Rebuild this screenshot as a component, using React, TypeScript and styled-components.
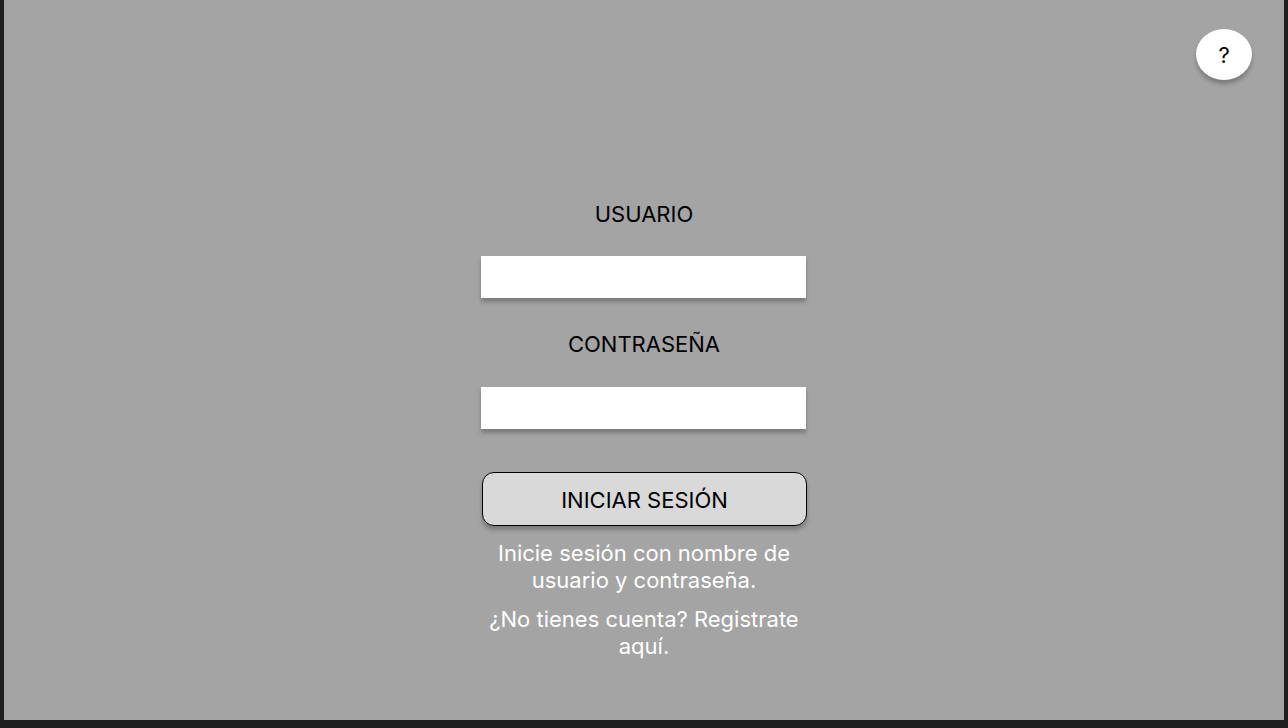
import React from "react";
import styled, { createGlobalStyle } from "styled-components";

const Global = createGlobalStyle`
  html, body { margin: 0; padding: 0; background: #1e1e1e; }
  body { font-family: Inter, "Noto Sans", sans-serif; }
  * { box-sizing: border-box; }
`;

const Frame = styled.div`
  width: 1288px;
  height: 728px;
  padding: 0 4px 8px 4px;
  background: #1e1e1e;
`;

const Screen = styled.main`
  position: relative;
  width: 1280px;
  height: 720px;
  background: #a4a4a4;
  display: flex;
  justify-content: center;
  padding-top: 201px;
`;

const HelpButton = styled.button`
  position: absolute;
  top: 29px;
  right: 32px;
  width: 56px;
  height: 51px;
  border-radius: 50%;
  border: none;
  background: #ffffff;
  box-shadow: 0 4px 4px rgba(0, 0, 0, 0.25);
  font-family: Inter, sans-serif;
  font-size: 22px;
  font-weight: 400;
  color: #000;
  display: flex;
  align-items: center;
  justify-content: center;
  padding: 0;
`;

const Form = styled.form`
  width: 326px;
  display: flex;
  flex-direction: column;
  align-items: flex-start;
`;

const Label = styled.label<{ $gapTop?: number; $gapBottom?: number }>`
  align-self: center;
  font-size: 22px;
  line-height: 26px;
  color: #000;
  margin-top: ${(p) => p.$gapTop ?? 0}px;
  margin-bottom: ${(p) => p.$gapBottom ?? 29}px;
`;

const Input = styled.input`
  width: 325px;
  height: 42px;
  border: none;
  background: #ffffff;
  box-shadow: 0 4px 4px rgba(0, 0, 0, 0.25);
  outline: none;
`;

const SubmitButton = styled.button`
  margin-top: 43px;
  margin-left: 1px;
  width: 325px;
  height: 54px;
  padding: 1px 0 0 0;
  border: 1px solid #000;
  border-radius: 12px;
  background: #d9d9d9;
  box-shadow: 0 4px 4px rgba(0, 0, 0, 0.25);
  font-family: Inter, sans-serif;
  font-size: 22px;
  color: #000;
`;

const Note = styled.p<{ $gapTop: number }>`
  align-self: stretch;
  margin: ${(p) => p.$gapTop}px 0 0 0;
  font-size: 22px;
  line-height: 27px;
  color: #ffffff;
  text-align: center;
`;

export default function App() {
  return (
    <>
      <Global />
      <Frame>
        <Screen>
          <HelpButton type="button">?</HelpButton>
          <Form onSubmit={(e) => e.preventDefault()}>
            <Label>USUARIO</Label>
            <Input type="text" />
            <Label $gapTop={33} $gapBottom={30}>CONTRASEÑA</Label>
            <Input type="password" />
            <SubmitButton type="submit">INICIAR SESIÓN</SubmitButton>
            <Note $gapTop={14}>Inicie sesión con nombre de usuario y contraseña.</Note>
            <Note $gapTop={12}>¿No tienes cuenta? Registrate aquí.</Note>
          </Form>
        </Screen>
      </Frame>
    </>
  );
}
